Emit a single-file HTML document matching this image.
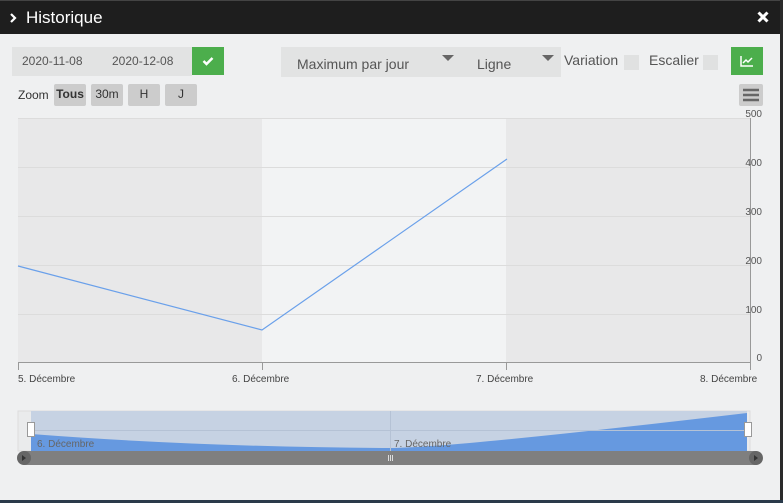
<!DOCTYPE html>
<html><head><style>
body{margin:0;width:783px;height:503px;overflow:hidden;background:#1e1e1e;font-family:"Liberation Sans",sans-serif;position:relative}
.t{position:absolute;white-space:nowrap}
</style></head><body>
<div class="t" style="left:0;top:0;width:783px;height:1px;background:#444"></div>
<div class="t" style="left:0;top:34px;width:780px;height:466px;background:#eff0f1"></div>
<svg class="t" style="left:9px;top:13px" width="8" height="10"><path d="M2 1L6 5L2 9" stroke="#fff" stroke-width="2.2" fill="none"/></svg>
<div class="t" style="left:26px;top:8px;color:#fff;font-size:17px">Historique</div>
<svg class="t" style="left:757px;top:11px" width="12" height="12"><path d="M1.5 1.5L10.5 10.5M10.5 1.5L1.5 10.5" stroke="#fff" stroke-width="3"/></svg>

<div class="t" style="left:12px;top:47px;width:180px;height:29px;background:#e2e3e3"></div>
<div class="t" style="left:22px;top:54px;font-size:12px;color:#555">2020-11-08</div>
<div class="t" style="left:112px;top:54px;font-size:12px;color:#555">2020-12-08</div>
<div class="t" style="left:192px;top:47px;width:32px;height:28px;background:#4cae4c"></div>
<svg class="t" style="left:202px;top:56px" width="12" height="10"><path d="M1.5 5L4.5 8L10.5 2" stroke="#fff" stroke-width="2.5" fill="none"/></svg>

<div class="t" style="left:281px;top:47px;width:280px;height:30px;background:#e2e3e3"></div>
<div class="t" style="left:297px;top:56px;font-size:14px;color:#555">Maximum par jour</div>
<div class="t" style="left:442px;top:55px;width:0;height:0;border-left:6px solid transparent;border-right:6px solid transparent;border-top:6px solid #666"></div>
<div class="t" style="left:477px;top:56px;font-size:14px;color:#555">Ligne</div>
<div class="t" style="left:542px;top:55px;width:0;height:0;border-left:6px solid transparent;border-right:6px solid transparent;border-top:6px solid #666"></div>
<div class="t" style="left:564px;top:52px;font-size:14px;color:#555">Variation</div>
<div class="t" style="left:624px;top:55px;width:15px;height:15px;background:#e0e1e1"></div>
<div class="t" style="left:649px;top:52px;font-size:14px;color:#555">Escalier</div>
<div class="t" style="left:703px;top:55px;width:15px;height:15px;background:#e0e1e1"></div>
<div class="t" style="left:731px;top:47px;width:32px;height:28px;background:#4cae4c"></div>
<svg class="t" style="left:740px;top:55px" width="14" height="12"><path d="M1 1V11H13M3 8L6 5L8 7L12 3" stroke="#fff" stroke-width="1.5" fill="none"/></svg>

<div class="t" style="left:18px;top:88px;font-size:12px;color:#333">Zoom</div>
<div class="t" style="left:54px;top:84px;width:32px;height:22px;background:#ccc;border-radius:2px;font-size:12px;font-weight:bold;color:#333;text-align:center;line-height:20px">Tous</div>
<div class="t" style="left:91px;top:84px;width:32px;height:22px;background:#ccc;border-radius:2px;font-size:12px;color:#333;text-align:center;line-height:20px">30m</div>
<div class="t" style="left:128px;top:84px;width:32px;height:22px;background:#ccc;border-radius:2px;font-size:12px;color:#333;text-align:center;line-height:20px">H</div>
<div class="t" style="left:165px;top:84px;width:32px;height:22px;background:#ccc;border-radius:2px;font-size:12px;color:#333;text-align:center;line-height:20px">J</div>
<div class="t" style="left:739px;top:84px;width:24px;height:22px;background:#ccc;border-radius:2px"></div>
<svg class="t" style="left:742px;top:88px" width="18" height="14"><path d="M1 2H17M1 7H17M1 12H17" stroke="#666" stroke-width="2.5"/></svg>

<svg class="t" style="left:0;top:100px" width="783" height="300">
<rect x="18" y="18" width="244" height="244" fill="#e8e8e9"/>
<rect x="262" y="18" width="244" height="244" fill="#f2f3f4"/>
<rect x="506" y="18" width="244" height="244" fill="#e8e8e9"/>
<g stroke="#dcdcdc"><path d="M18 18.5H750M18 67.5H750M18 116.5H750M18 165.5H750M18 214.5H750"/></g>
<path d="M18 262.5H750M750.5 18V262" stroke="#999"/>
<path d="M18.5 262V270M262.5 262V270M506.5 262V270M750.5 262V270" stroke="#999"/>
<path d="M18 166L262 230L507 59" stroke="#6aa0ea" fill="none" stroke-width="1.2"/>
<g font-size="10" fill="#555" text-anchor="end"><text x="762" y="17">500</text><text x="762" y="66">400</text><text x="762" y="115">300</text><text x="762" y="164">200</text><text x="762" y="213">100</text><text x="762" y="261">0</text></g>
<g font-size="10" fill="#444"><text x="18" y="282">5. Décembre</text><text x="232" y="282">6. Décembre</text><text x="476" y="282">7. Décembre</text><text x="700" y="282">8. Décembre</text></g>
</svg>

<svg class="t" style="left:0;top:405px" width="783" height="65">
<rect x="18" y="6" width="732" height="40" fill="#eaebec" stroke="#ddd"/>
<rect x="31" y="6" width="716" height="40" fill="#c6d2e3"/>
<path d="M31 29Q200 42 390 43Q450 43 747 8V46H31Z" fill="#6699e0"/>
<path d="M31 25.5H747M390.5 6V46" stroke="#b5c2d5"/>
<text x="37" y="42" font-size="10" fill="#666">6. Décembre</text>
<text x="394" y="42" font-size="10" fill="#666">7. Décembre</text>
<rect x="27.5" y="17.5" width="7" height="14" fill="#fff" stroke="#999"/>
<rect x="744.5" y="17.5" width="7" height="14" fill="#fff" stroke="#999"/>
<rect x="18" y="46" width="744" height="14" rx="7" fill="#7f7f7f"/>
<circle cx="24" cy="53" r="7" fill="#666"/><circle cx="756" cy="53" r="7" fill="#666"/>
<path d="M26 53L22 50V56Z M754 50V56L758 53Z" fill="#333"/>
<path d="M388.5 50V56M390.5 50V56M392.5 50V56" stroke="#ddd"/>
</svg>

<div class="t" style="left:780px;top:0;width:3px;height:503px;background:#2a2a2a"></div>
<div class="t" style="left:0;top:500px;width:783px;height:3px;background:#2a3a4a"></div>
</body></html>
